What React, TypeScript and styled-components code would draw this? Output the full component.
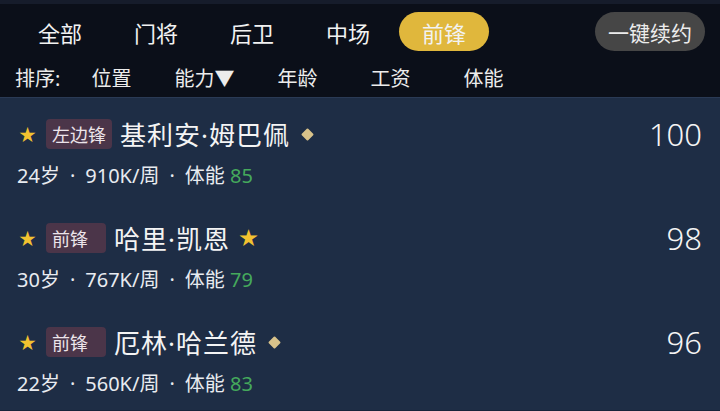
import React from "react";
import styled, { createGlobalStyle } from "styled-components";

const GlobalStyle = createGlobalStyle`
  html, body {
    margin: 0;
    padding: 0;
    background: #1e2d45;
  }
  body {
    font-family: "Noto Sans", "Noto Sans CJK SC", sans-serif;
  }
`;

const Screen = styled.div`
  width: 720px;
  height: 411px;
  overflow: hidden;
  background: #1e2d45;
  display: flex;
  flex-direction: column;
`;

const Header = styled.div`
  background: #0b0f19;
  border-top: 4px solid #161c2b;
  border-bottom: 1px solid #2a3a55;
`;

const TabBar = styled.div`
  display: flex;
  align-items: center;
  padding: 8px 15px 6px 15px;
`;

const Tab = styled.div<{ $active?: boolean }>`
  width: 90px;
  height: 39px;
  margin-right: 6px;
  border-radius: 20px;
  display: flex;
  align-items: center;
  justify-content: center;
  font-size: 22px;
  color: #f2f2f2;
  background: ${({ $active }) => ($active ? "#e0b73c" : "transparent")};
`;

const RenewButton = styled.div`
  margin-left: auto;
  width: 110px;
  height: 39px;
  border-radius: 20px;
  background: #464646;
  color: #ececec;
  font-size: 21px;
  display: flex;
  align-items: center;
  justify-content: center;
`;

const SortBar = styled.div`
  height: 40px;
  display: flex;
  align-items: center;
  padding-left: 15px;
  color: #ececec;
  font-size: 20px;
`;

const SortLabel = styled.div`
  width: 50px;
`;

const SortItem = styled.div`
  width: 93px;
  text-align: center;
`;

const List = styled.div`
  flex: 1;
  display: flex;
  flex-direction: column;
  border-bottom: 2px solid #17233a;
`;

const Row = styled.div`
  height: 104px;
  box-sizing: border-box;
  padding: 21px 18px 0 17px;
  display: flex;
  flex-direction: column;
`;

const TitleLine = styled.div`
  height: 30px;
  display: flex;
  align-items: center;
`;

const Star = styled.span<{ $size?: number }>`
  color: #f2c230;
  font-size: ${({ $size }) => $size ?? 17}px;
  line-height: 1;
  margin-left: 2px;
`;

const Tag = styled.span`
  min-width: 60px;
  height: 30px;
  box-sizing: border-box;
  margin-left: 10px;
  padding: 0 6px 0 6px;
  border-radius: 4px;
  background: #4b3549;
  color: #ece4ea;
  font-size: 18px;
  display: inline-flex;
  align-items: center;
`;

const Name = styled.span`
  margin-left: 8px;
  font-size: 26px;
  letter-spacing: 1px;
  color: #f4f4f4;
`;

const Diamond = styled.span`
  width: 9px;
  height: 9px;
  margin-left: 13px;
  background: #d8c28a;
  transform: rotate(45deg);
  border-radius: 1px;
`;

const Score = styled.span`
  margin-left: auto;
  font-size: 31px;
  color: #f4f4f4;
  font-weight: 300;
`;

const Meta = styled.div`
  margin-top: 15px;
  line-height: 24px;
  font-size: 20px;
  color: #e8ebf0;
`;

const Green = styled.span`
  color: #45a95c;
`;

const Sep = styled.span`
  margin: 0 10px;
`;

type Player = {
  tag: string;
  name: string;
  badge: "diamond" | "star";
  score: number;
  age: number;
  wage: string;
  stamina: number;
};

const players: Player[] = [
  { tag: "左边锋", name: "基利安·姆巴佩", badge: "diamond", score: 100, age: 24, wage: "910K", stamina: 85 },
  { tag: "前锋", name: "哈里·凯恩", badge: "star", score: 98, age: 30, wage: "767K", stamina: 79 },
  { tag: "前锋", name: "厄林·哈兰德", badge: "diamond", score: 96, age: 22, wage: "560K", stamina: 83 },
];

const tabs = ["全部", "门将", "后卫", "中场", "前锋"];
const sorts = ["位置", "能力▼", "年龄", "工资", "体能"];

export default function App() {
  return (
    <Screen>
      <GlobalStyle />
      <Header>
        <TabBar>
          {tabs.map((t) => (
            <Tab key={t} $active={t === "前锋"}>
              {t}
            </Tab>
          ))}
          <RenewButton>一键续约</RenewButton>
        </TabBar>
        <SortBar>
          <SortLabel>排序:</SortLabel>
          {sorts.map((s) => (
            <SortItem key={s}>{s}</SortItem>
          ))}
        </SortBar>
      </Header>
      <List>
        {players.map((p) => (
          <Row key={p.name}>
            <TitleLine>
              <Star>★</Star>
              <Tag>{p.tag}</Tag>
              <Name>{p.name}</Name>
              {p.badge === "diamond" ? <Diamond /> : <Star $size={19} style={{ marginLeft: 9 }}>★</Star>}
              <Score>{p.score}</Score>
            </TitleLine>
            <Meta>
              {p.age}岁<Sep>·</Sep>
              {p.wage}/周<Sep>·</Sep>体能 <Green>{p.stamina}</Green>
            </Meta>
          </Row>
        ))}
      </List>
    </Screen>
  );
}
